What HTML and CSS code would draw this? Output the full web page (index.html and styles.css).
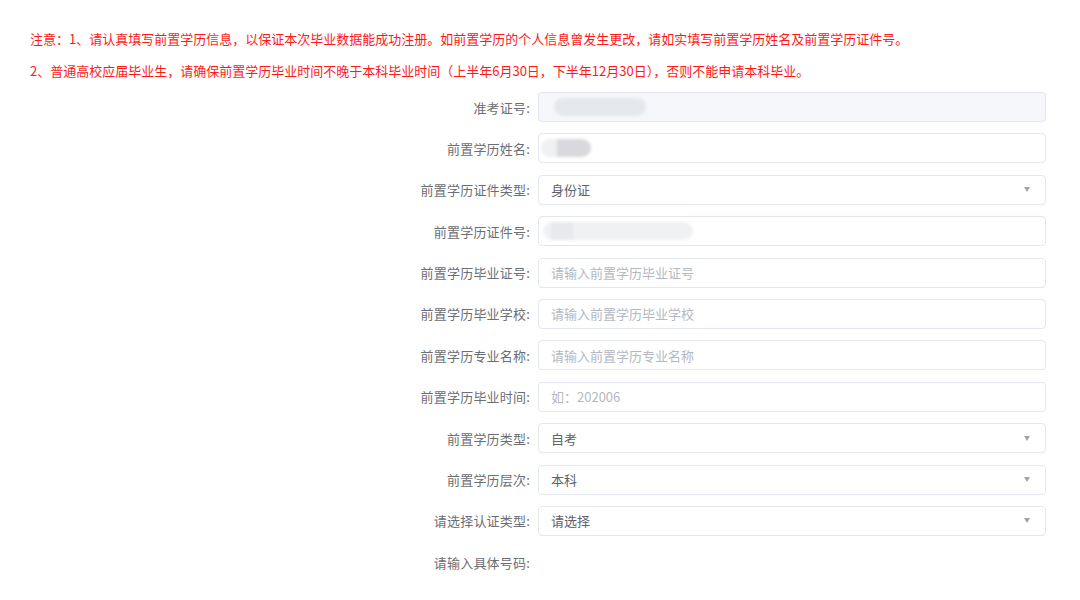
FILE: index.html
```html
<!DOCTYPE html>
<html lang="zh-CN">

<head>
    <meta charset="UTF-8">
    <title>前置学历信息</title>
    <link rel="stylesheet" href="styles.css">
</head>

<body>
    <div class="notice">
        <p>注意：1、请认真填写前置学历信息，以保证本次毕业数据能成功注册。如前置学历的个人信息曾发生更改，请如实填写前置学历姓名及前置学历证件号。</p>
        <p>2、普通高校应届毕业生，请确保前置学历毕业时间不晚于本科毕业时间（上半年6月30日，下半年12月30日），否则不能申请本科毕业。</p>
    </div>

    <form class="form">
        <div class="row">
            <label class="label">准考证号:</label>
            <div class="input disabled"><span class="mask mask-id"></span></div>
        </div>
        <div class="row">
            <label class="label">前置学历姓名:</label>
            <div class="input"><span class="mask mask-name"></span></div>
        </div>
        <div class="row">
            <label class="label">前置学历证件类型:</label>
            <div class="input select"><span class="value">身份证</span><span class="arrow"></span></div>
        </div>
        <div class="row">
            <label class="label">前置学历证件号:</label>
            <div class="input"><span class="mask mask-card"></span></div>
        </div>
        <div class="row">
            <label class="label">前置学历毕业证号:</label>
            <div class="input"><span class="placeholder">请输入前置学历毕业证号</span></div>
        </div>
        <div class="row">
            <label class="label">前置学历毕业学校:</label>
            <div class="input"><span class="placeholder">请输入前置学历毕业学校</span></div>
        </div>
        <div class="row">
            <label class="label">前置学历专业名称:</label>
            <div class="input"><span class="placeholder">请输入前置学历专业名称</span></div>
        </div>
        <div class="row">
            <label class="label">前置学历毕业时间:</label>
            <div class="input"><span class="placeholder">如：202006</span></div>
        </div>
        <div class="row">
            <label class="label">前置学历类型:</label>
            <div class="input select"><span class="value">自考</span><span class="arrow"></span></div>
        </div>
        <div class="row">
            <label class="label">前置学历层次:</label>
            <div class="input select"><span class="value">本科</span><span class="arrow"></span></div>
        </div>
        <div class="row">
            <label class="label">请选择认证类型:</label>
            <div class="input select"><span class="value">请选择</span><span class="arrow"></span></div>
        </div>
        <div class="row">
            <label class="label">请输入具体号码:</label>
        </div>
    </form>
</body>

</html>
```

FILE: styles.css
```css
body {
    margin: 0;
    background: #fff;
    font-family: "Noto Sans CJK SC", "Liberation Sans", sans-serif;
    font-size: 13px;
}

.notice {
    padding: 30px 0 0 30px;
    color: #ff1a1a;
}

.notice p {
    margin: 0 0 14px;
    line-height: 18px;
}

.form {
    width: 1046px;
    margin-top: -2px;
    display: flex;
    flex-direction: column;
    gap: 11.4px;
}

.row {
    display: flex;
    align-items: center;
    height: 30px;
}

.label {
    width: 538px;
    padding-right: 8px;
    box-sizing: border-box;
    text-align: right;
    color: #6b6e73;
    flex: none;
    letter-spacing: 0.2px;
}

.input {
    position: relative;
    flex: 1;
    height: 30px;
    box-sizing: border-box;
    border: 1px solid #e4e7ed;
    border-radius: 4px;
    background: #fff;
    padding: 0 12px;
    display: flex;
    align-items: center;
    color: #606266;
}

.input.disabled {
    background: #f5f7fa;
}

.placeholder {
    color: #b4b8c0;
}

.select .value {
    flex: 1;
}

.arrow {
    width: 0;
    height: 0;
    border-left: 3.5px solid transparent;
    border-right: 3.5px solid transparent;
    border-top: 5px solid #a0a4ab;
    margin-right: 3px;
}

.mask {
    display: block;
    height: 18px;
    border-radius: 9px;
    filter: blur(1.5px);
}

.mask-id {
    width: 92px;
    margin-left: 3px;
    background: #e4e7eb;
}

.mask-name {
    width: 50px;
    margin-left: -10px;
    background: linear-gradient(90deg, #eef0f2 0 16px, #d9d9dd 16px);
}

.mask-card {
    width: 150px;
    margin-left: -8px;
    background: linear-gradient(90deg, #f0f1f3 0 8px, #e8e9ec 8px 30px, #f0f1f3 30px);
}
```
